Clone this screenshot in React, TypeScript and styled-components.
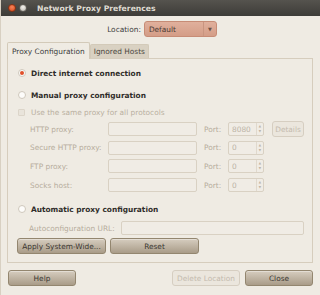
import { Fragment } from "react";
import styled, { createGlobalStyle } from "styled-components";

const GlobalStyle = createGlobalStyle`
  html, body {
    margin: 0;
    padding: 0;
    background: #efebe3;
  }
  * {
    box-sizing: border-box;
  }
`;

const FONT = `"DejaVu Sans", "Liberation Sans", sans-serif`;

const Window = styled.div`
  width: 320px;
  height: 295px;
  background: #efebe3;
  font-family: ${FONT};
  font-size: 7.4px;
  color: #3c3c3c;
  border-left: 1px solid #d8d0c2;
  overflow: hidden;
`;

const TitleBar = styled.div`
  height: 16px;
  display: flex;
  align-items: center;
  padding-left: 7px;
  background: linear-gradient(#55534e, #3d3c38);
`;

const WinButton = styled.span<{ $close?: boolean }>`
  width: 8px;
  height: 8px;
  border-radius: 50%;
  margin-right: 3px;
  background: ${({ $close }) =>
    $close
      ? "radial-gradient(circle at 50% 35%, #f7835a, #d64a1c)"
      : "radial-gradient(circle at 50% 35%, #f3f1ec, #b9b5ad)"};
  border: 1px solid ${({ $close }) => ($close ? "#8a3214" : "#5f5c56")};
`;

const Title = styled.span`
  margin-left: 7px;
  font-weight: bold;
  font-size: 7.7px;
  color: #dfdbd2;
`;

const Body = styled.div`
  padding: 0 7px 0 6px;
`;

const LocationRow = styled.div`
  display: flex;
  justify-content: center;
  align-items: center;
  gap: 3px;
  margin-top: 5px;
  padding-left: 4px;
`;

const Combo = styled.div`
  width: 73px;
  height: 16px;
  border: 1px solid #c78c76;
  border-radius: 3px;
  background: linear-gradient(#e0b09c, #d49d87);
  display: flex;
  align-items: center;
  padding-left: 4px;
  color: #4a3a33;
`;

const ComboText = styled.span`
  flex: 1;
`;

const ComboArrow = styled.span`
  width: 13px;
  height: 100%;
  border-left: 1px solid #c99580;
  display: flex;
  align-items: center;
  justify-content: center;
  font-size: 5px;
  color: #6d5247;
`;

const Tabs = styled.div`
  display: flex;
  align-items: flex-end;
  margin-top: 5px;
  height: 16px;
`;

const Tab = styled.div<{ $active?: boolean }>`
  height: ${({ $active }) => ($active ? 17 : 14)}px;
  padding: 0 ${({ $active }) => ($active ? 4 : 3)}px;
  display: flex;
  align-items: center;
  border: 1px solid #d3cab9;
  border-bottom: none;
  border-radius: 2px 2px 0 0;
  background: ${({ $active }) => ($active ? "#efebe3" : "#d9d1c2")};
  color: ${({ $active }) => ($active ? "#3c3c3c" : "#4a4640")};
  position: relative;
  z-index: ${({ $active }) => ($active ? 1 : 0)};
  margin-bottom: ${({ $active }) => ($active ? -1 : 0)}px;
`;

const Frame = styled.div`
  border: 1px solid #d6cdbd;
  height: 205px;
  padding: 8px 8px 0 9px;
  display: flex;
  flex-direction: column;
`;

const OptionRow = styled.div<{ $top: number; $disabled?: boolean }>`
  display: flex;
  align-items: center;
  height: 12px;
  margin-top: ${({ $top }) => $top}px;
  padding-left: 1px;
  gap: 4px;
  font-weight: ${({ $disabled }) => ($disabled ? "normal" : "bold")};
  color: ${({ $disabled }) => ($disabled ? "#b9af9f" : "#2f2d2a")};
`;

const Radio = styled.span<{ $checked?: boolean }>`
  width: 8px;
  height: 8px;
  border-radius: 50%;
  border: 1px solid #cfc8bc;
  background: #fdfcfa;
  display: flex;
  align-items: center;
  justify-content: center;
  margin-right: 1px;
  &::after {
    content: "";
    width: 4px;
    height: 4px;
    border-radius: 50%;
    background: ${({ $checked }) => ($checked ? "#e0502a" : "transparent")};
  }
`;

const Check = styled.span`
  width: 7px;
  height: 7px;
  border: 1px solid #dcd5c9;
  border-radius: 1px;
  background: #e9e4db;
  margin-right: 2px;
`;

const ProxyGrid = styled.div`
  display: grid;
  grid-template-columns: 78px 89px 7px 24px 36px 8px 32px;
  grid-auto-rows: 16px;
  row-gap: 2.7px;
  margin-top: 3px;
  padding-left: 13px;
  align-items: center;
  color: #b6ac9c;
`;

const Label = styled.span<{ $col?: number }>`
  grid-column: ${({ $col }) => $col ?? 1};
`;

const Entry = styled.div<{ $col?: number; $w?: number }>`
  grid-column: ${({ $col }) => $col ?? 2};
  height: 14px;
  width: ${({ $w }) => ($w ? `${$w}px` : "auto")};
  border: 1px solid #d9d1c3;
  border-radius: 2px;
  background: #f0ece5;
  display: flex;
  align-items: center;
  padding-left: 3px;
  color: #bdb4a6;
`;

const SpinValue = styled.span`
  flex: 1;
`;

const SpinArrows = styled.span`
  width: 7px;
  height: 100%;
  border-left: 1px solid #e0d9cd;
  display: flex;
  flex-direction: column;
  align-items: center;
  justify-content: center;
  font-size: 3px;
  line-height: 5px;
  color: #bcb2a3;
`;

const Button = styled.div<{ $disabled?: boolean; $w: number }>`
  width: ${({ $w }) => $w}px;
  height: 16px;
  display: flex;
  align-items: center;
  justify-content: center;
  border-radius: 3px;
  border: 1px solid ${({ $disabled }) => ($disabled ? "#d6cec1" : "#93866f")};
  background: ${({ $disabled }) =>
    $disabled ? "#ebe6dd" : "linear-gradient(#d6cdbf, #a99c88)"};
  color: ${({ $disabled }) => ($disabled ? "#c3baad" : "#3a3631")};
  box-shadow: ${({ $disabled }) =>
    $disabled ? "none" : "inset 0 1px 0 rgba(255,255,255,0.35)"};
`;

const DetailsCell = styled.div`
  grid-column: 7;
`;

const UrlRow = styled.div`
  display: flex;
  align-items: center;
  height: 14px;
  margin-top: 6px;
  padding-left: 12px;
  color: #b6ac9c;
`;

const UrlLabel = styled.span`
  width: 92px;
`;

const ButtonRow = styled.div<{ $top: number; $gap: number }>`
  display: flex;
  gap: ${({ $gap }) => $gap}px;
  margin-top: ${({ $top }) => $top}px;
`;

const Spacer = styled.div`
  flex: 1;
`;

const DialogButtons = styled.div`
  display: flex;
  gap: 5px;
  margin-top: 7px;
  padding-left: 1px;
`;

const proxies = [
  { label: "HTTP proxy:", port: "8080", details: true },
  { label: "Secure HTTP proxy:", port: "0" },
  { label: "FTP proxy:", port: "0" },
  { label: "Socks host:", port: "0" },
];

export default function App() {
  return (
    <>
      <GlobalStyle />
      <Window>
        <TitleBar>
          <WinButton $close />
          <WinButton />
          <Title>Network Proxy Preferences</Title>
        </TitleBar>
        <Body>
          <LocationRow>
            <span>Location:</span>
            <Combo>
              <ComboText>Default</ComboText>
              <ComboArrow>▼</ComboArrow>
            </Combo>
          </LocationRow>
          <Tabs>
            <Tab $active>Proxy Configuration</Tab>
            <Tab>Ignored Hosts</Tab>
          </Tabs>
          <Frame>
            <OptionRow $top={0}>
              <Radio $checked />
              Direct internet connection
            </OptionRow>
            <OptionRow $top={10}>
              <Radio />
              Manual proxy configuration
            </OptionRow>
            <OptionRow $top={5} $disabled>
              <Check />
              Use the same proxy for all protocols
            </OptionRow>
            <ProxyGrid>
              {proxies.map((p) => (
                <Fragment key={p.label}>
                  <Label>{p.label}</Label>
                  <Entry />
                  <Label $col={4}>Port:</Label>
                  <Entry $col={5}>
                    <SpinValue>{p.port}</SpinValue>
                    <SpinArrows>
                      <span>▲</span>
                      <span>▼</span>
                    </SpinArrows>
                  </Entry>
                  {p.details && (
                    <DetailsCell>
                      <Button $disabled $w={32}>
                        Details
                      </Button>
                    </DetailsCell>
                  )}
                </Fragment>
              ))}
            </ProxyGrid>
            <OptionRow $top={10}>
              <Radio />
              Automatic proxy configuration
            </OptionRow>
            <UrlRow>
              <UrlLabel>Autoconfiguration URL:</UrlLabel>
              <Entry $w={183} />
            </UrlRow>
            <ButtonRow $top={3} $gap={4}>
              <Button $w={89}>Apply System-Wide...</Button>
              <Button $w={89}>Reset</Button>
            </ButtonRow>
          </Frame>
          <DialogButtons>
            <Button $w={68}>Help</Button>
            <Spacer />
            <Button $disabled $w={68}>
              Delete Location
            </Button>
            <Button $w={68}>Close</Button>
          </DialogButtons>
        </Body>
      </Window>
    </>
  );
}
